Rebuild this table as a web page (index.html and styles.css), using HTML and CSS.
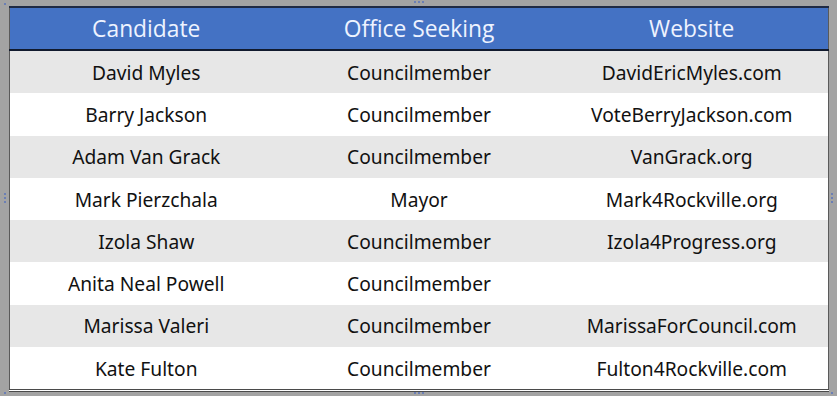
FILE: index.html
```html
<!DOCTYPE html>
<html>
<head>
<meta charset="utf-8">
<link rel="stylesheet" href="styles.css">
</head>
<body>
<div class="frame">
  <table class="grid">
    <thead>
      <tr><th>Candidate</th><th>Office Seeking</th><th>Website</th></tr>
    </thead>
    <tbody>
      <tr class="alt"><td>David Myles</td><td>Councilmember</td><td>DavidEricMyles.com</td></tr>
      <tr><td>Barry Jackson</td><td>Councilmember</td><td>VoteBerryJackson.com</td></tr>
      <tr class="alt"><td>Adam Van Grack</td><td>Councilmember</td><td>VanGrack.org</td></tr>
      <tr><td>Mark Pierzchala</td><td>Mayor</td><td>Mark4Rockville.org</td></tr>
      <tr class="alt"><td>Izola Shaw</td><td>Councilmember</td><td>Izola4Progress.org</td></tr>
      <tr><td>Anita Neal Powell</td><td>Councilmember</td><td></td></tr>
      <tr class="alt"><td>Marissa Valeri</td><td>Councilmember</td><td>MarissaForCouncil.com</td></tr>
      <tr><td>Kate Fulton</td><td>Councilmember</td><td>Fulton4Rockville.com</td></tr>
    </tbody>
  </table>
  <span class="handle h-top"></span>
  <span class="handle h-bottom"></span>
  <span class="handle h-left"></span>
  <span class="handle h-right"></span>
  <span class="dot d-tl"></span>
  <span class="dot d-bl"></span>
  <span class="dot d-br"></span>
</div>
</body>
</html>
```
FILE: styles.css
```css
html, body {
  margin: 0;
  padding: 0;
}
body {
  width: 837px;
  height: 396px;
  overflow: hidden;
  background: #a3a3a3;
}
.frame {
  position: relative;
  width: 837px;
  height: 396px;
  box-sizing: border-box;
  padding: 6px 8px 7px 9px;
  background: #a3a3a3;
}
.grid {
  width: 820px;
  border-collapse: collapse;
  table-layout: fixed;
  background: #fff;
  border-top: 2px solid #1f2a44;
  border-left: 1px solid #5a5a5a;
  border-right: 1px solid #5a5a5a;
  border-bottom: 3px double #4a4a4a;
}
.grid th {
  background: #4472c4;
  color: #eef3ff;
  font-family: "Open Sans", "Noto Sans", sans-serif;
  font-weight: 500;
  font-size: 22.8px;
  height: 41px;
  padding: 0;
  text-align: center;
  border-bottom: 2px solid #111a2e;
}
.grid td {
  font-family: "Noto Sans", "Open Sans", sans-serif;
  font-size: 19.2px;
  color: #111;
  height: 42.3px;
  padding: 0;
  text-align: center;
}
.grid tr.alt td {
  background: #e7e7e7;
}
.handle {
  position: absolute;
  width: 2px;
  height: 2px;
  background: #6b7fb5;
}
.h-top { left: 414px; top: 1px; box-shadow: 4px 0 #6b7fb5, 8px 0 #6b7fb5; }
.h-bottom { left: 414px; top: 392px; box-shadow: 4px 0 #6b7fb5, 8px 0 #6b7fb5; }
.h-left { left: 4px; top: 193px; box-shadow: 0 4px #6b7fb5, 0 8px #6b7fb5; }
.h-right { left: 831px; top: 193px; box-shadow: 0 4px #6b7fb5, 0 8px #6b7fb5; }
.dot {
  position: absolute;
  width: 2px;
  height: 2px;
  background: #6b7fb5;
}
.d-tl { left: 4px; top: 3px; }
.d-bl { left: 4px; top: 392px; }
.d-br { left: 831px; top: 392px; }
```
